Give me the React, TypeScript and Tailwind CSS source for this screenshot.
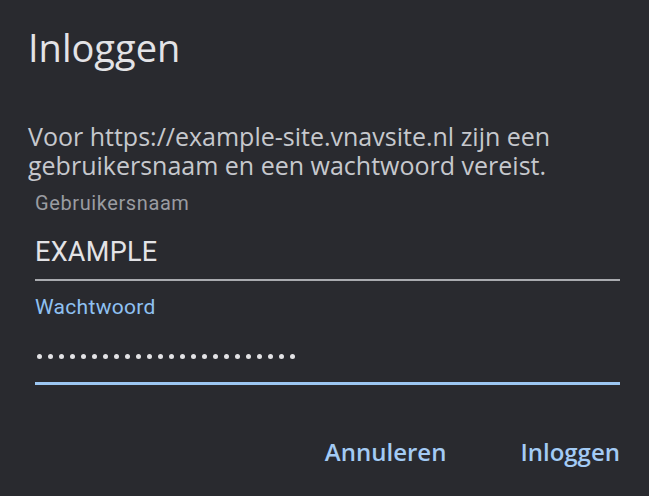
export default function App() {
  const dots = Array.from({ length: 24 });
  return (
    <div className="h-[496px] w-[649px] bg-[#292a2f] pl-[28px] pr-[29px] pt-[25px]">
      <h1 className="text-[38px] leading-[44px] text-[#e3e3e6] font-['Open_Sans',sans-serif]">
        Inloggen
      </h1>
      <p className="mt-[53px] text-[25px] leading-[29px] text-[#c6c8cd] font-['Open_Sans',sans-serif]">
        Voor https://example-site.vnavsite.nl zijn een gebruikersnaam en een wachtwoord vereist.
      </p>
      <div className="ml-[7px] font-['Roboto',sans-serif]">
        <div className="mt-[12px] text-[20px] leading-[22px] tracking-[0.6px] text-[#9a9ca1]">Gebruikersnaam</div>
        <div className="mt-[22px] pb-[11px] text-[27px] leading-[32px] tracking-[0.3px] text-[#e3e3e6] border-b-2 border-[#a9abb0]">
          EXAMPLE
        </div>
        <div className="mt-[14px] text-[21px] leading-[24px] tracking-[0.3px] text-[#8fc1f2]">Wachtwoord</div>
        <div className="mt-[35px] mb-[23px] ml-[2px] flex gap-[6px]">
          {dots.map((_, i) => (
            <span key={i} className="h-[5px] w-[5px] rounded-full bg-[#e3e3e6]" />
          ))}
        </div>
        <div className="h-[3px] bg-[#9cc6f2]" />
      </div>
      <div className="mt-[52px] flex justify-end gap-[74px] text-[24px] leading-[29px] font-semibold text-[#a3cbf5] font-['Open_Sans',sans-serif]">
        <span>Annuleren</span>
        <span>Inloggen</span>
      </div>
    </div>
  );
}
